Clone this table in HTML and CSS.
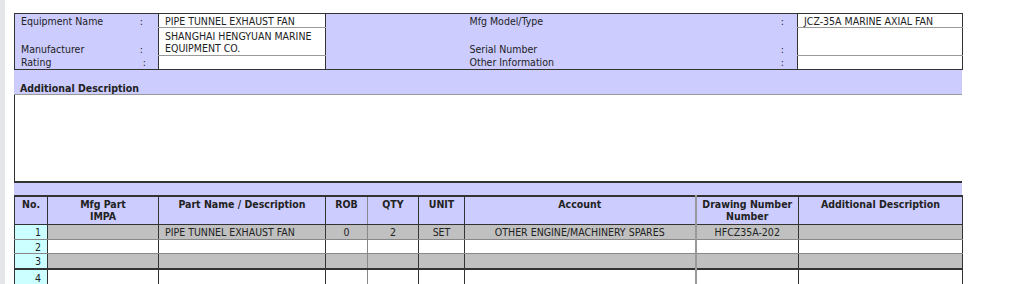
FILE: index.html
```html
<!DOCTYPE html>
<html lang="en">

<head>
	<meta charset="UTF-8">
	<meta name="viewport" content="width=device-width, initial-scale=1.0">
	<title>Spare Parts Requisition</title>
	<link rel="stylesheet" href="styles.css">
</head>

<body>
	<div class="sheet">
		<!-- equipment details -->
		<table class="info">
			<colgroup>
				<col style="width: 144px">
				<col style="width: 167px">
				<col style="width: 138px">
				<col style="width: 334px">
				<col style="width: 165px">
			</colgroup>
			<tr class="row-a">
				<td class="lbl"><div class="pair"><span>Equipment Name</span><span>:</span></div></td>
				<td class="val">PIPE TUNNEL EXHAUST FAN</td>
				<td class="gap" rowspan="3"></td>
				<td class="lbl"><div class="pair wide"><span>Mfg Model/Type</span><span>:</span></div></td>
				<td class="val">JCZ-35A MARINE AXIAL FAN</td>
			</tr>
			<tr class="row-b">
				<td class="lbl low"><div class="pair"><span>Manufacturer</span><span>:</span></div></td>
				<td class="val top">SHANGHAI HENGYUAN MARINE EQUIPMENT CO.</td>
				<td class="lbl low"><div class="pair wide"><span>Serial Number</span><span>:</span></div></td>
				<td class="val"></td>
			</tr>
			<tr class="row-c">
				<td class="lbl"><div class="pair rating"><span>Rating</span><span>:</span></div></td>
				<td class="val"></td>
				<td class="lbl"><div class="pair wide"><span>Other Information</span><span>:</span></div></td>
				<td class="val"></td>
			</tr>
		</table>

		<div class="band desc-title"><strong>Additional Description</strong></div>
		<div class="desc-box"></div>
		<div class="band spacer"></div>

		<!-- parts list -->
		<table class="parts">
			<colgroup>
				<col style="width: 33px">
				<col style="width: 111px">
				<col style="width: 167px">
				<col style="width: 42px">
				<col style="width: 51px">
				<col style="width: 46px">
				<col style="width: 231px">
				<col style="width: 103px">
				<col style="width: 164px">
			</colgroup>
			<tr class="head">
				<th>No.</th>
				<th>Mfg Part<br>IMPA</th>
				<th>Part Name / Description</th>
				<th class="soft-r">ROB</th>
				<th>QTY</th>
				<th>UNIT</th>
				<th>Account</th>
				<th class="soft-l">Drawing Number<br>Number</th>
				<th>Additional Description</th>
			</tr>
			<tr class="odd">
				<td class="no">1</td>
				<td></td>
				<td class="left">PIPE TUNNEL EXHAUST FAN</td>
				<td class="soft-r">0</td>
				<td>2</td>
				<td>SET</td>
				<td>OTHER ENGINE/MACHINERY SPARES</td>
				<td class="soft-l">HFCZ35A-202</td>
				<td></td>
			</tr>
			<tr class="even short">
				<td class="no">2</td>
				<td></td><td></td><td class="soft-r"></td><td></td><td></td><td></td><td class="soft-l"></td><td></td>
			</tr>
			<tr class="odd">
				<td class="no">3</td>
				<td></td><td></td><td class="soft-r"></td><td></td><td></td><td></td><td class="soft-l"></td><td></td>
			</tr>
			<tr class="even split">
				<td class="no">4</td>
				<td></td><td></td><td class="soft-r"></td><td></td><td></td><td></td><td class="soft-l"></td><td></td>
			</tr>
		</table>
	</div>
</body>

</html>
```

FILE: styles.css
```css
html, body {
	margin: 0;
	background: #fff;
}

body {
	border-left: 5px solid #e4e6ea; /* frame edge */
	font-family: "DejaVu Sans Condensed", "DejaVu Sans", Verdana, sans-serif;
	font-size: 10.5px;
	color: #222;
	height: 284px;
	overflow: hidden;
}

.sheet {
	width: 948px;
	margin: 13px 0 0 9px;
}

table {
	border-collapse: collapse;
	table-layout: fixed;
	width: 948px;
}

td, th {
	padding: 0;
	line-height: 12px;
}

/* equipment details */
.info {
	background: #ccccff;
	border: 1px solid #333;
}

.info .row-a { height: 14px; }
.info .row-b { height: 28px; }
.info .row-c { height: 14px; }

.lbl {
	padding-left: 6px;
	vertical-align: middle;
}

.lbl.low {
	vertical-align: bottom;
	padding-bottom: 1px;
}

.pair {
	display: flex;
	justify-content: space-between;
	padding-right: 15px;
}

.pair.rating { padding-right: 12px; }
.pair.wide { padding-right: 13px; }

.val {
	background: #fff;
	border: 1px solid #333;
	border-bottom-color: #999;
	padding: 0 6px;
	vertical-align: middle;
}

.row-c .val {
	border-bottom-color: #333;
}

.val.top {
	vertical-align: top;
	padding-top: 2px;
}

/* description block */
.band {
	background: #ccccff;
}

.desc-title {
	height: 25px;
	padding-left: 6px;
	box-sizing: border-box;
	display: flex;
	align-items: flex-end;
	border-bottom: 1px solid #999;
}

.desc-box {
	height: 86px;
	border-left: 1px solid #333;
	border-bottom: 2px solid #333;
	background: #fff;
}

.spacer {
	height: 12px;
}

/* parts list */
.parts {
	border: 1px solid #333;
	border-top-width: 2px;
	text-align: center;
}

.parts th {
	background: #ccccff;
	height: 26px;
	vertical-align: top;
	padding-top: 1px;
	border: 1px solid #333;
	font-weight: bold;
}

.parts td {
	height: 14px;
	border: 1px solid #333;
	border-top-color: #888;
	border-bottom-color: #888;
}

.parts .short td { height: 13px; }

.parts .soft-r { border-right-color: #888; }
.parts .soft-l { border-left: 2px solid #999; }

.odd td { background: #c0c0c0; }
.even td { background: #fff; }

.parts td.no {
	background: #ccffff;
	text-align: right;
	padding-right: 6px;
}

.parts td.left {
	text-align: left;
	padding-left: 6px;
}

.parts .split td {
	border-top: 2px solid #333;
	height: 15px;
}
```
